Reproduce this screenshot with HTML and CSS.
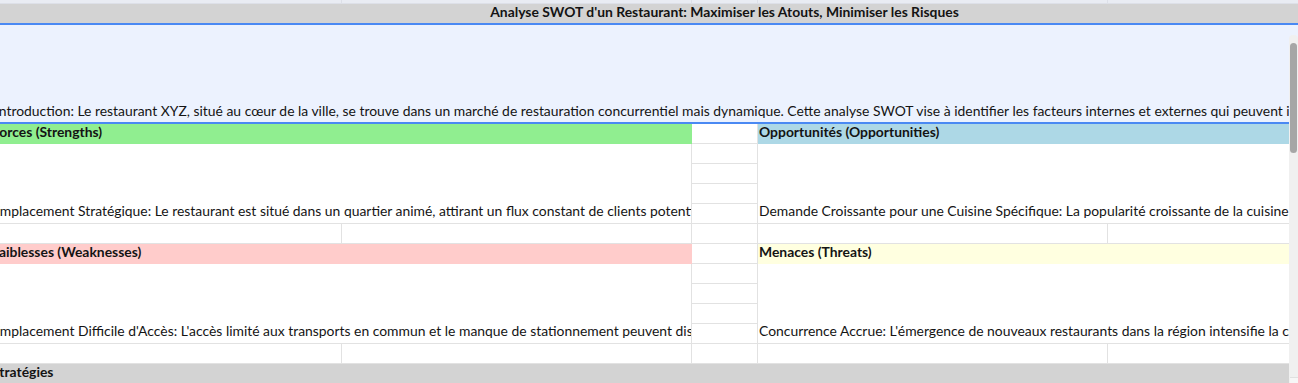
FILE: index.html
```html
<!DOCTYPE html>
<html lang="fr">
<head>
<meta charset="utf-8">
<title>Analyse SWOT</title>
<link rel="stylesheet" href="styles.css">
</head>
<body>
<div class="viewport">
  <div class="sheet">
    <div class="c tail"></div><div class="c tail"></div><div class="c tail"></div><div class="c tail"></div><div class="c tail"></div>

    <div class="c title">Analyse SWOT d'un Restaurant: Maximiser les Atouts, Minimiser les Risques</div>

    <div class="c intro">Introduction: Le restaurant XYZ, situé au cœur de la ville, se trouve dans un marché de restauration concurrentiel mais dynamique. Cette analyse SWOT vise à identifier les facteurs internes et externes qui peuvent influencer sa performance et sa croissance.</div>

    <div class="c head green">Forces (Strengths)</div>
    <div class="c"></div>
    <div class="c head blue">Opportunités (Opportunities)</div>

    <div class="c text">Emplacement Stratégique: Le restaurant est situé dans un quartier animé, attirant un flux constant de clients potentiels.</div>
    <div class="c"></div>
    <div class="c text">Demande Croissante pour une Cuisine Spécifique: La popularité croissante de la cuisine durable et locale offre une opportunité d'expansion.</div>
    <div class="c"></div>
    <div class="c"></div>
    <div class="c"></div>

    <div class="c"></div><div class="c"></div><div class="c"></div><div class="c"></div><div class="c"></div>

    <div class="c head pink">Faiblesses (Weaknesses)</div>
    <div class="c"></div>
    <div class="c head yellow">Menaces (Threats)</div>

    <div class="c text">Emplacement Difficile d'Accès: L'accès limité aux transports en commun et le manque de stationnement peuvent dissuader certains clients.</div>
    <div class="c"></div>
    <div class="c text">Concurrence Accrue: L'émergence de nouveaux restaurants dans la région intensifie la concurrence sur les prix et la qualité.</div>
    <div class="c"></div>
    <div class="c"></div>
    <div class="c"></div>

    <div class="c"></div><div class="c"></div><div class="c"></div><div class="c"></div><div class="c"></div>

    <div class="c head section">Stratégies</div>
  </div>

  <div class="scrollbar">
    <div class="thumb"></div>
    <div class="track-end"></div>
  </div>
</div>
</body>
</html>
```
FILE: styles.css
```css
html, body {
  margin: 0;
  padding: 0;
  background: #ffffff;
}

body {
  width: 1298px;
  height: 383px;
  overflow: hidden;
  font-family: "Lato", "Open Sans", sans-serif;
  font-size: 13.9px;
  line-height: 16px;
  color: #141414;
}

.viewport {
  position: relative;
  width: 1298px;
  height: 383px;
  overflow: hidden;
}

.sheet {
  display: grid;
  grid-template-columns: 351px 350px 66px 350px 350px;
  grid-auto-rows: 20px;
  margin-top: -16px;
  margin-left: -9px;
  width: 1467px;
}

.c {
  box-sizing: border-box;
  border-right: 1px solid #e2e2e2;
  border-bottom: 1px solid #e2e2e2;
  padding: 0 0 0 1px;
  white-space: nowrap;
  overflow: hidden;
  min-width: 0;
}

.tail {
  background: #e9ecf3;
  border-color: #dde0e8;
}

.title {
  grid-column: span 5;
  background: #d3d3d3;
  border-color: transparent;
  font-weight: 700;
  text-align: center;
}

.intro {
  grid-column: span 5;
  grid-row: span 5;
  background: #ecf2fe;
  border-color: transparent;
  display: flex;
  align-items: flex-end;
  padding: 0 0 4px 4px;
  position: relative;
  z-index: 1;
  overflow: visible;
}

.intro::after {
  content: "";
  position: absolute;
  left: 0;
  right: 0;
  top: -1px;
  bottom: -1px;
  border-top: 2px solid #4a89f3;
  border-bottom: 2px solid #4a89f3;
  pointer-events: none;
}

.head {
  grid-column: span 2;
  font-weight: 700;
  border-color: transparent;
}

.green { background: #90ee90; }
.blue { background: #add8e6; }
.pink { background: #ffcccb; }
.yellow { background: #ffffe0; }

.section {
  grid-column: span 5;
  background: #d3d3d3;
}

.text {
  grid-column: span 2;
  grid-row: span 4;
  display: flex;
  align-items: flex-end;
  padding-bottom: 4px;
}

.scrollbar {
  position: absolute;
  z-index: 5;
  top: 35px;
  right: 0;
  width: 9px;
  height: 348px;
  background: #f0f0f0;
  border-radius: 4px 4px 0 0;
  display: flex;
  flex-direction: column;
  align-items: center;
}

.thumb {
  margin-top: 8px;
  width: 7px;
  height: 110px;
  border-radius: 4px;
  background: #a6a6a6;
}

.track-end {
  margin-top: auto;
  width: 8px;
  height: 5px;
  background: #f6f6f6;
  border-top: 1px solid #e0e0e0;
}
```
